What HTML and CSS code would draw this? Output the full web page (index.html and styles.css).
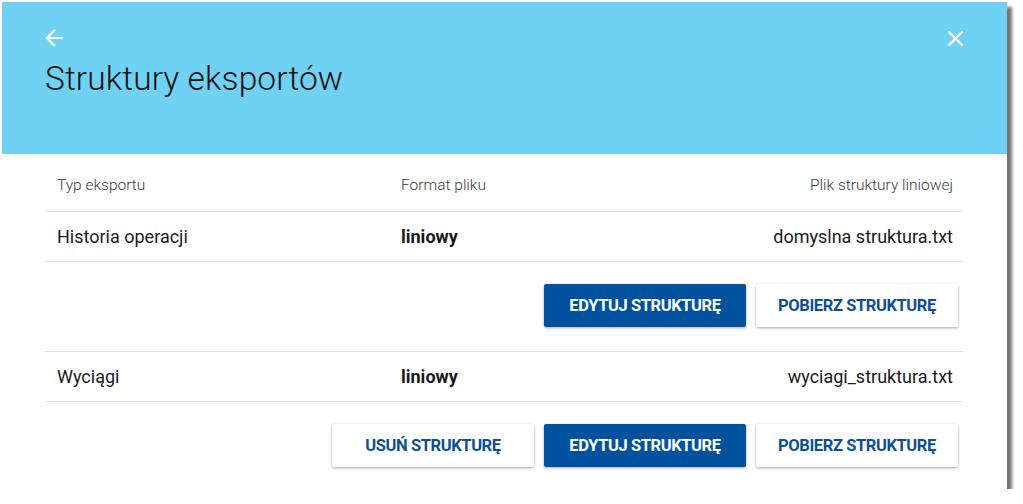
FILE: index.html
```html
<!DOCTYPE html>
<html lang="pl">
<head>
  <meta charset="UTF-8" />
  <title>Struktury eksportów</title>
  <link rel="stylesheet" href="styles.css">
</head>
<body>
  <div class="dialog">
    <div class="dialog-header">
      <div class="header-icons">
        <svg class="icon back" width="26" height="26" viewBox="0 0 24 24"><path d="M20 11H7.830l5.59-5.59L12 4l-8 8 8 8 1.41-1.410L7.83 13H20v-2z" fill="#fff"/></svg>
        <svg class="icon close" width="27" height="27" viewBox="0 0 24 24"><path d="M19 6.41L17.59 5 12 10.59 6.41 5 5 6.41 10.59 12 5 17.59 6.41 19 12 13.41 17.59 19 19 17.59 13.41 12z" fill="#fff"/></svg>
      </div>
      <h1>Struktury eksportów</h1>
    </div>

    <div class="dialog-body">
      <div class="row head">
        <div>Typ eksportu</div>
        <div>Format pliku</div>
        <div class="right">Plik struktury liniowej</div>
      </div>

      <div class="row item">
        <div>Historia operacji</div>
        <div class="bold">liniowy</div>
        <div class="right">domyslna struktura.txt</div>
      </div>
      <div class="actions">
        <button class="btn primary">EDYTUJ STRUKTURĘ</button>
        <button class="btn">POBIERZ STRUKTURĘ</button>
      </div>

      <div class="row item">
        <div>Wyciągi</div>
        <div class="bold">liniowy</div>
        <div class="right">wyciagi_struktura.txt</div>
      </div>
      <div class="actions last">
        <button class="btn">USUŃ STRUKTURĘ</button>
        <button class="btn primary">EDYTUJ STRUKTURĘ</button>
        <button class="btn">POBIERZ STRUKTURĘ</button>
      </div>
    </div>
  </div>
</body>
</html>
```

FILE: styles.css
```css
body { margin: 0; background: #fff; font-family: Roboto, "Liberation Sans", sans-serif; color: #222; }
.dialog { margin: 2px 0 0 2px; width: 1005px; height: 487px; background: #fff; box-shadow: 5px 5px 3px rgba(0,0,0,0.55); }
.dialog-header { background: #6fd2f5; height: 152px; box-sizing: border-box; padding: 22px 38px 0 39px; }
.header-icons { display: flex; justify-content: space-between; align-items: center; height: 28px; }
.header-icons .icon { display: block; }
.dialog-header h1 { margin: 7px 0 0 4px; font-weight: 300; font-size: 33.5px; color: #111; letter-spacing: 0.1px; }
.dialog-body { padding: 0 44px 0 43px; }
.row { display: grid; grid-template-columns: 344px 1fr 1fr; align-items: center; border-bottom: 1px solid #e2e2e2; padding: 0 10px 0 12px; }
.row.head { height: 53px; padding-top: 4px; font-size: 15.5px; font-weight: 300; color: #3a3a3a; }
.row.item { height: 49px; font-size: 18px; color: #1a1a1a; }
.row .right { text-align: right; }
.row .bold { font-weight: bold; }
.actions { display: flex; justify-content: flex-end; gap: 10px; padding: 22px 5px 24px 0; border-bottom: 1px solid #e2e2e2; }
.actions.last { border-bottom: none; }
.btn { width: 202px; height: 43px; border: none; border-radius: 2px; background: #fff; color: #0c4e98; font-family: Roboto, "Liberation Sans", sans-serif; font-weight: bold; font-size: 16.5px; letter-spacing: -0.4px; box-shadow: 0 1px 3px rgba(0,0,0,0.35); cursor: pointer; }
.btn.primary { background: #00529e; color: #fff; }
```
